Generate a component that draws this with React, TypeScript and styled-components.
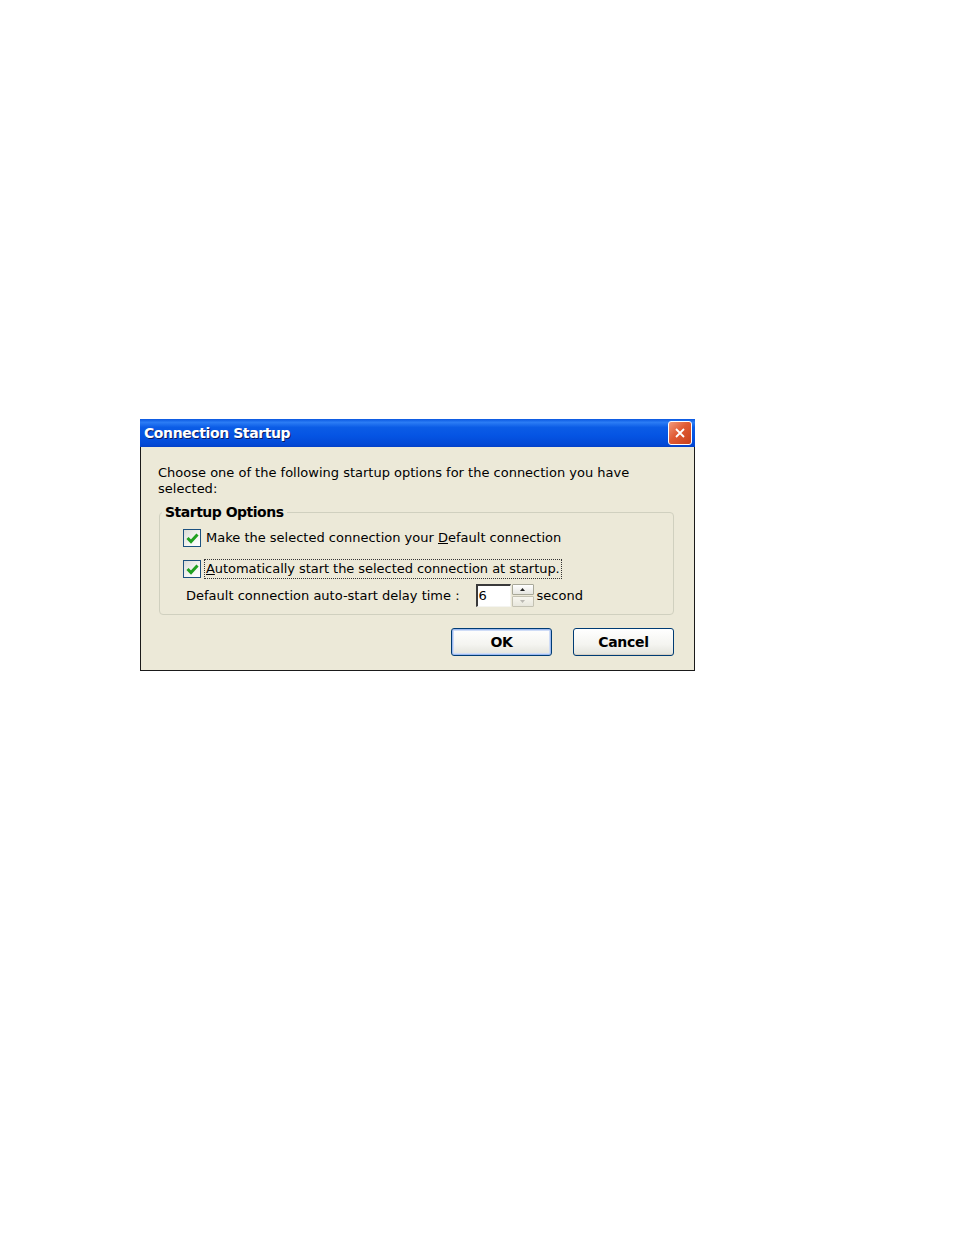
import React from 'react'
import { createGlobalStyle, styled } from 'styled-components'

const GlobalStyle = createGlobalStyle`
  html, body {
    margin: 0;
    padding: 0;
    background: #ffffff;
  }
  body {
    font-family: "DejaVu Sans", Verdana, sans-serif;
  }
`

const Page = styled.div`
  width: 954px;
  height: 1235px;
  padding: 419px 0 0 140px;
  box-sizing: border-box;
`

const Dialog = styled.div`
  width: 555px;
  box-sizing: border-box;
  border: 1px solid #1a1a1a;
  border-top: none;
  background: #ece9d8;
`

const TitleBar = styled.div`
  height: 28px;
  margin: 0 -1px;
  display: flex;
  align-items: center;
  justify-content: space-between;
  padding: 0 3px 0 4px;
  background: linear-gradient(
    to bottom,
    #0a57e0 0%,
    #2b7cf5 12%,
    #0b5ce6 30%,
    #0554e3 60%,
    #0349d6 90%,
    #0340c8 100%
  );
`

const Title = styled.span`
  color: #ffffff;
  font-weight: 700;
  font-size: 14px;
  letter-spacing: -0.4px;
  text-shadow: 1px 1px 0 #0a1a60;
`

const CloseButton = styled.div`
  width: 22px;
  height: 22px;
  border: 1px solid #ffffff;
  border-radius: 3px;
  background: linear-gradient(135deg, #f09b7f 0%, #e05a33 45%, #c8401c 100%);
  display: flex;
  align-items: center;
  justify-content: center;
`

const Body = styled.div`
  padding: 18px 20px 14px 17px;
`

const Intro = styled.p`
  margin: 0;
  font-size: 13px;
  line-height: 16px;
  color: #000;
`

const Group = styled.fieldset`
  margin: 7px 0 0 1px;
  padding: 0 0 7px 0;
  border: 1px solid #d0d0bf;
  border-radius: 4px;
`

const Legend = styled.legend`
  margin-left: 2px;
  padding: 0 3px;
  font-size: 14px;
  font-weight: 700;
  letter-spacing: -0.5px;
  color: #000;
`

const Row = styled.div<{ $indent: number; $top: number }>`
  display: flex;
  align-items: center;
  padding-left: ${({ $indent }) => $indent}px;
  margin-top: ${({ $top }) => $top}px;
  font-size: 13px;
  color: #000;
`

const Box = styled.span`
  width: 18px;
  height: 18px;
  box-sizing: border-box;
  border: 1px solid #1c5180;
  background: linear-gradient(135deg, #dcdcd7 0%, #f6f6f4 60%, #ffffff 100%);
  display: flex;
  align-items: center;
  justify-content: center;
  margin-right: 4px;
  flex-shrink: 0;
`

const Label = styled.span<{ $focused?: boolean }>`
  padding: 0 1px;
  outline: ${({ $focused }) => ($focused ? '1px dotted #333' : 'none')};
  line-height: 18px;
  letter-spacing: ${({ $focused }) => ($focused ? '-0.05px' : '0')};
`

const NumberInput = styled.div`
  width: 35px;
  height: 23px;
  box-sizing: border-box;
  margin-left: 16px;
  border-top: 2px solid #3a3a3a;
  border-left: 2px solid #3a3a3a;
  border-right: 1px solid #f4f4f0;
  border-bottom: 1px solid #f4f4f0;
  background: #ffffff;
  font-size: 13px;
  line-height: 20px;
  padding-left: 1px;
`

const Spinner = styled.div`
  display: flex;
  flex-direction: column;
  gap: 1px;
  margin-left: 1px;
  margin-right: 3px;
`

const SpinButton = styled.div<{ $disabled?: boolean }>`
  width: 22px;
  height: 11px;
  box-sizing: border-box;
  border: 1px solid #a8a899;
  border-radius: 1px;
  background: linear-gradient(to bottom, #ffffff 0%, #e6e6e0 100%);
  display: flex;
  align-items: center;
  justify-content: center;
  opacity: ${({ $disabled }) => ($disabled ? 0.6 : 1)};
`

const Buttons = styled.div`
  display: flex;
  justify-content: flex-end;
  gap: 21px;
  margin-top: 13px;
`

const Button = styled.div<{ $default?: boolean }>`
  width: 101px;
  height: 28px;
  box-sizing: border-box;
  border: 1px solid #003c74;
  border-radius: 3px;
  background: linear-gradient(to bottom, #ffffff 0%, #f4f4f0 60%, #e3e3db 100%);
  box-shadow: ${({ $default }) =>
    $default ? 'inset 0 0 0 1px #9dbaf0, inset 0 0 0 2px #cfdcf6' : 'inset 0 -1px 0 #d6d0c5'};
  display: flex;
  align-items: center;
  justify-content: center;
  font-size: 14px;
  font-weight: 700;
  letter-spacing: -0.3px;
  color: #000;
`

const Check = () => (
  <svg width="13" height="12" viewBox="0 0 13 12">
    <path d="M1.5 6 L5 9.5 L11.5 2.5" fill="none" stroke="#21a121" strokeWidth="3" />
  </svg>
)

export default function App() {
  return (
    <Page>
      <GlobalStyle />
      <Dialog>
        <TitleBar>
          <Title>Connection Startup</Title>
          <CloseButton>
            <svg width="12" height="12" viewBox="0 0 12 12">
              <path d="M2 2 L10 10 M10 2 L2 10" stroke="#ffffff" strokeWidth="1.8" />
            </svg>
          </CloseButton>
        </TitleBar>
        <Body>
          <Intro>
            Choose one of the following startup options for the connection you have
            <br />
            selected:
          </Intro>
          <Group>
            <Legend>Startup Options</Legend>
            <Row $indent={23} $top={9}>
              <Box>
                <Check />
              </Box>
              <Label>
                Make the selected connection your <u>D</u>efault connection
              </Label>
            </Row>
            <Row $indent={23} $top={13}>
              <Box>
                <Check />
              </Box>
              <Label $focused>
                <u>A</u>utomatically start the selected connection at startup.
              </Label>
            </Row>
            <Row $indent={26} $top={6}>
              <span>Default connection auto-start delay time :</span>
              <NumberInput>6</NumberInput>
              <Spinner>
                <SpinButton>
                  <svg width="5" height="3" viewBox="0 0 5 3">
                    <path d="M0 3 L2.5 0 L5 3 Z" fill="#222" />
                  </svg>
                </SpinButton>
                <SpinButton $disabled>
                  <svg width="5" height="3" viewBox="0 0 5 3">
                    <path d="M0 0 L2.5 3 L5 0 Z" fill="#999" />
                  </svg>
                </SpinButton>
              </Spinner>
              <span>second</span>
            </Row>
          </Group>
          <Buttons>
            <Button $default>OK</Button>
            <Button>Cancel</Button>
          </Buttons>
        </Body>
      </Dialog>
    </Page>
  )
}
